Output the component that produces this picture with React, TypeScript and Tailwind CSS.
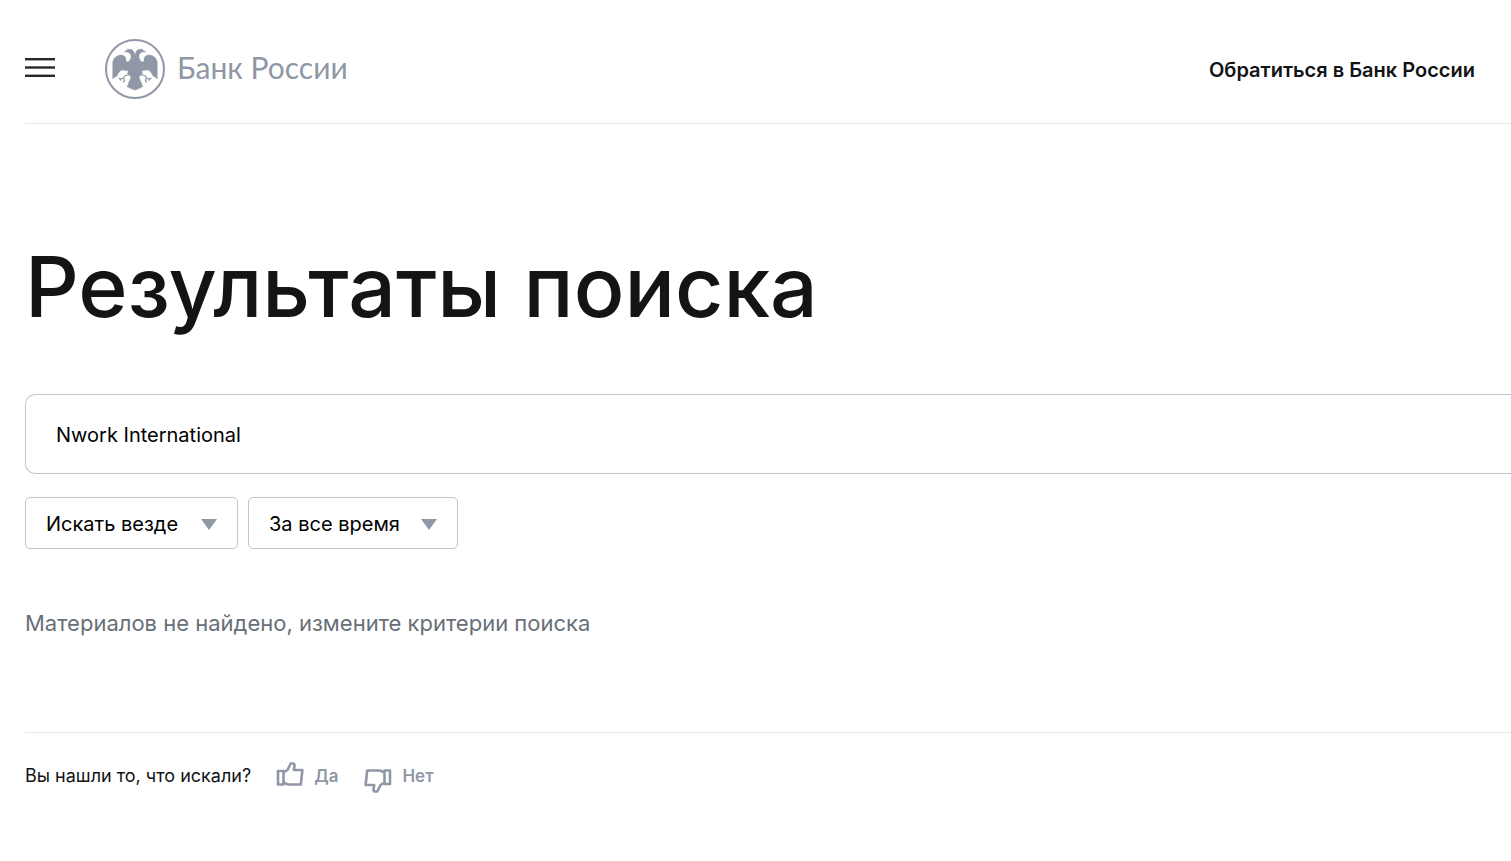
import React, { useState } from "react";

const WHERE_OPTIONS = ["Искать везде", "В документах", "В новостях"];
const PERIOD_OPTIONS = ["За все время", "За месяц", "За год"];

function MenuIcon() {
  return (
    <svg viewBox="0 0 30 19" className="h-[19px] w-[30px]" fill="#25292c" aria-hidden="true">
      <rect width="30" height="2.4" />
      <rect y="8.3" width="30" height="2.4" />
      <rect y="16.6" width="30" height="2.4" />
    </svg>
  );
}

function Emblem() {
  const half =
    "M120 77C119 69 116 60 109 58L103 58L96 57L99 60C94 61 90 63 88 67C92 65 96 66 99 67C106 69 109 75 108 82C106 91 101 97 95 95C91 93 94 88 92 83C89 77 84 74 76 75C62 77 54 86 53 99L53 147C57 143 61 140 66 139C67 135 68 132 71 130C73 124 77 121 82 120C90 122 97 121 100 124C98 129 96 132 98 134L107 139C108 144 106 149 103 153L96 171L101 171L103 175L109 175L112 179L117 178L120 181Z";
  const leg = "M71 145C77 147 83 147 86 143L90 137L98 135M86 145L89 151L84 157M77 147L78 152";

  return (
    <svg viewBox="30 27 180 180" className="size-15 shrink-0" aria-hidden="true">
      <circle cx="120" cy="117" r="87" fill="none" stroke="#9097a6" strokeWidth="6" />
      {["", "matrix(-1 0 0 1 240 0)"].map((transform) => (
        <g key={transform} transform={transform}>
          <path d={half} fill="#9097a6" stroke="#9097a6" strokeWidth="1" />
          <path d={leg} fill="none" stroke="#9097a6" strokeWidth="3.5" />
        </g>
      ))}
    </svg>
  );
}

function ThumbIcon({ className }: { className: string }) {
  return (
    <svg
      viewBox="0 0 28 26"
      className={`h-[26px] w-7 ${className}`}
      fill="none"
      stroke="#9097a6"
      strokeWidth="2.6"
      strokeLinejoin="round"
      aria-hidden="true"
    >
      <path d="M2 10H7.5V23.5H2Z" />
      <path d="M7.5 11.5L11.5 9L14.7 2.5H17.6L18.6 4L17.8 9H26.4L24.8 23.5H12L7.5 21.5" />
    </svg>
  );
}

interface FilterSelectProps {
  label: string;
  options: string[];
  width: string;
}

function FilterSelect({ label, options, width }: FilterSelectProps) {
  return (
    <div className={`relative ${width}`}>
      <select
        aria-label={label}
        className="h-[52px] w-full appearance-none rounded-[5px] border border-[#c4c5ca] bg-white px-5 pt-0.5 text-[20px] text-black"
      >
        {options.map((option) => (
          <option key={option}>{option}</option>
        ))}
      </select>
      <svg
        viewBox="0 0 16 11"
        className="pointer-events-none absolute top-[22px] right-[21px] h-[11px] w-4"
        aria-hidden="true"
      >
        <path d="M0 0H16L8 11Z" fill="#9097a6" />
      </svg>
    </div>
  );
}

export default function App() {
  const [query, setQuery] = useState("Nwork International");

  return (
    <div className="min-h-screen bg-white pl-[25px] font-[Inter,sans-serif] text-[#121416]">
      {/* Header */}
      <header className="flex h-[124px] items-center justify-between border-b border-[#e6e7e8] pt-3.5 pr-9">
        <div className="flex items-center gap-[50px]">
          <button type="button" aria-label="Меню" className="cursor-pointer pb-0.5">
            <MenuIcon />
          </button>
          <a href="#" className="flex items-center gap-3 text-[#9097a6]">
            <Emblem />
            <span className="pb-1 font-[Lato,sans-serif] text-[30px] leading-none">Банк России</span>
          </a>
        </div>
        <a href="#" className="pt-0.5 text-[20px] font-semibold">
          Обратиться в Банк России
        </a>
      </header>

      <main>
        <h1 className="pt-28 text-[84px] leading-[102px] font-medium">Результаты поиска</h1>

        {/* Search form */}
        <form className="pt-14" onSubmit={(e) => e.preventDefault()}>
          <input
            type="text"
            aria-label="Поиск"
            value={query}
            onChange={(e) => setQuery(e.target.value)}
            className="block h-20 w-full rounded-l-[10px] border border-r-0 border-[#c4c5ca] px-[30px] pt-0.5 text-[20px] text-black outline-none"
          />
          <div className="flex gap-2.5 pt-[23px]">
            <FilterSelect label="Раздел" options={WHERE_OPTIONS} width="w-[213px]" />
            <FilterSelect label="Период" options={PERIOD_OPTIONS} width="w-[210px]" />
          </div>
        </form>

        <p className="pt-[58px] pb-[93px] text-[22px] leading-8 text-[#686f78]">
          Материалов не найдено, измените критерии поиска
        </p>
      </main>

      {/* Feedback */}
      <footer className="flex items-center border-t border-[#e6e7e8] pt-[27px] text-[17px]">
        <span className="pb-1 text-[18px]">Вы нашли то, что искали?</span>
        <div className="flex gap-[26px] pl-[25px] font-semibold text-[#9097a6]">
          <button type="button" className="flex cursor-pointer items-center gap-2.5">
            <ThumbIcon className="mb-1.5" />
            Да
          </button>
          <button type="button" className="flex cursor-pointer items-center gap-2.5">
            <ThumbIcon className="mt-2 rotate-180" />
            Нет
          </button>
        </div>
      </footer>
    </div>
  );
}
